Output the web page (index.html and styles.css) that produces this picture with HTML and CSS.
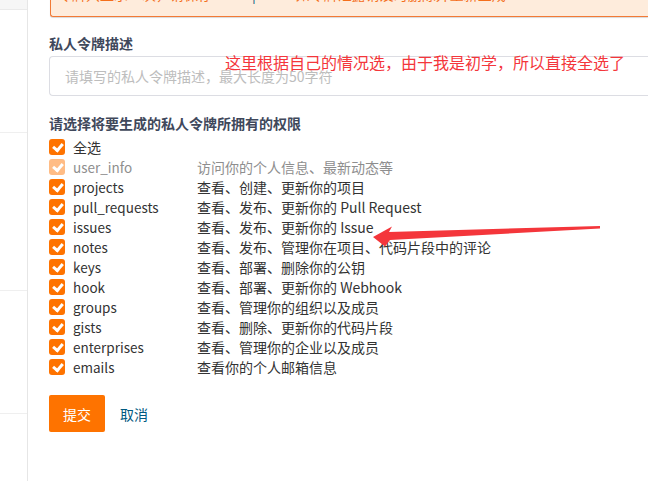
FILE: index.html
```html
<!DOCTYPE html>
<html lang="zh-CN">
<head>
<meta charset="utf-8">
<link rel="stylesheet" href="styles.css">
</head>
<body>
<div class="page">
  <aside class="sidebar">
    <div class="side-top"></div>
    <div class="side-block b1"></div>
    <div class="side-block b2"></div>
    <div class="side-block b3"></div>
  </aside>
  <main class="main">
    <div class="alert">
      <span class="alert-text">令牌只显示一次，请保存</span><span class="alert-link">|</span><span class="alert-text">如令牌泄露请及时删除并重新生成</span>
    </div>
    <div class="field">
      <div class="label">私人令牌描述</div>
      <div class="input">请填写的私人令牌描述，最大长度为50字符</div>
    </div>
    <div class="field perms">
      <div class="label">请选择将要生成的私人令牌所拥有的权限</div>
      <ul class="list">
        <li class="row"><span class="cb"></span><span class="name">全选</span><span class="desc"></span></li>
        <li class="row disabled"><span class="cb"></span><span class="name latin">user_info</span><span class="desc">访问你的个人信息、最新动态等</span></li>
        <li class="row"><span class="cb"></span><span class="name latin">projects</span><span class="desc">查看、创建、更新你的项目</span></li>
        <li class="row"><span class="cb"></span><span class="name latin">pull_requests</span><span class="desc">查看、发布、更新你的 Pull Request</span></li>
        <li class="row"><span class="cb"></span><span class="name latin">issues</span><span class="desc">查看、发布、更新你的 Issue</span></li>
        <li class="row"><span class="cb"></span><span class="name latin">notes</span><span class="desc">查看、发布、管理你在项目、代码片段中的评论</span></li>
        <li class="row"><span class="cb"></span><span class="name latin">keys</span><span class="desc">查看、部署、删除你的公钥</span></li>
        <li class="row"><span class="cb"></span><span class="name latin">hook</span><span class="desc">查看、部署、更新你的 Webhook</span></li>
        <li class="row"><span class="cb"></span><span class="name latin">groups</span><span class="desc">查看、管理你的组织以及成员</span></li>
        <li class="row"><span class="cb"></span><span class="name latin">gists</span><span class="desc">查看、删除、更新你的代码片段</span></li>
        <li class="row"><span class="cb"></span><span class="name latin">enterprises</span><span class="desc">查看、管理你的企业以及成员</span></li>
        <li class="row"><span class="cb"></span><span class="name latin">emails</span><span class="desc">查看你的个人邮箱信息</span></li>
      </ul>
    </div>
    <div class="actions">
      <button class="btn-submit">提交</button>
      <a class="btn-cancel">取消</a>
    </div>
  </main>
</div>
<div class="note">这里根据自己的情况选，由于我是初学，所以直接全选了</div>
<svg class="arrow" width="648" height="481" viewBox="0 0 648 481">
  <polygon points="373,237 392,226.5 389,232 600,226 600,228.5 390,240 385,246.5" fill="#f4363b"/>
</svg>
</body>
</html>
```

FILE: styles.css
```css
* { box-sizing: border-box; }
html, body { margin: 0; padding: 0; background: #fff; }
body {
  width: 648px;
  height: 481px;
  overflow: hidden;
  position: relative;
  font-family: "Noto Sans CJK SC", "Noto Sans", sans-serif;
  font-size: 14px;
  color: #333;
}
.page { display: flex; height: 481px; }
.sidebar {
  width: 28px;
  flex: none;
  border-right: 1px solid #e6e6e6;
  display: flex;
  flex-direction: column;
}
.side-top { height: 10px; background: #f6f6f6; border-bottom: 1px solid #eaeaea; }
.side-block { border-bottom: 1px solid #efefef; }
.b1 { height: 123px; }
.b2 { height: 158px; }
.b3 { height: 123px; }
.main { flex: 1; padding-left: 21px; min-width: 0; overflow: hidden; }
.alert {
  margin-top: -24px;
  margin-left: 1px;
  height: 41px;
  background: #feecdc;
  border: 1px solid #f27a36;
  border-radius: 3px 0 0 3px;
  border-right: none;
  box-shadow: 0 1px 1px #d9d9d9;
  padding: 10px 0 0 7px;
  white-space: nowrap;
  overflow: hidden;
  color: #f46f1c;
  font-size: 14px;
  line-height: 14px;
}
.alert-link { color: #005980; margin: 0 40px; }
.field { margin-top: 16px; }
.label {
  font-weight: bold;
  color: #40485b;
  font-size: 14px;
  line-height: 20px;
}
.input {
  margin-top: 3px;
  height: 40px;
  border: 1px solid #dcdde3;
  border-right: none;
  border-radius: 4px 0 0 4px;
  padding-left: 15px;
  line-height: 38px;
  color: #bdbdbd;
  font-size: 14px;
  white-space: nowrap;
}
.perms { margin-top: 17px; }
.list { list-style: none; margin: 4px 0 0; padding: 0; }
.row {
  display: flex;
  align-items: center;
  height: 20px;
}
.cb {
  width: 16px;
  height: 16px;
  flex: none;
  border-radius: 3px;
  background: #fe7300;
  position: relative;
}
.cb::after {
  content: "";
  position: absolute;
  left: 4px;
  top: 2px;
  width: 7px;
  height: 4px;
  border-left: 3px solid #fff;
  border-bottom: 3px solid #fff;
  transform: translate(0, 2px) rotate(-50deg);
  transform-origin: center;
}
.name { width: 124px; margin-left: 8px; color: #333; }
.latin { font-size: 13.5px; }
.desc { color: #333; white-space: nowrap; }
.disabled .cb { background: #ffbc85; }
.disabled .name, .disabled .desc { color: #8e8e8e; }
.actions {
  margin-top: 18px;
  display: flex;
  align-items: center;
  gap: 15px;
}
.btn-submit {
  width: 56px;
  height: 37px;
  border: none;
  border-radius: 2px;
  background: #fe7300;
  color: #fff;
  font-family: "Noto Sans CJK SC", sans-serif;
  font-size: 14px;
  padding: 0;
}
.btn-cancel { color: #005980; font-size: 14px; }
.note {
  position: absolute;
  left: 225px;
  top: 51px;
  color: #f4363b;
  font-family: "Noto Sans CJK SC", sans-serif;
  font-size: 16px;
  line-height: 22px;
  white-space: nowrap;
}
.arrow { position: absolute; left: 0; top: 0; pointer-events: none; }
```
